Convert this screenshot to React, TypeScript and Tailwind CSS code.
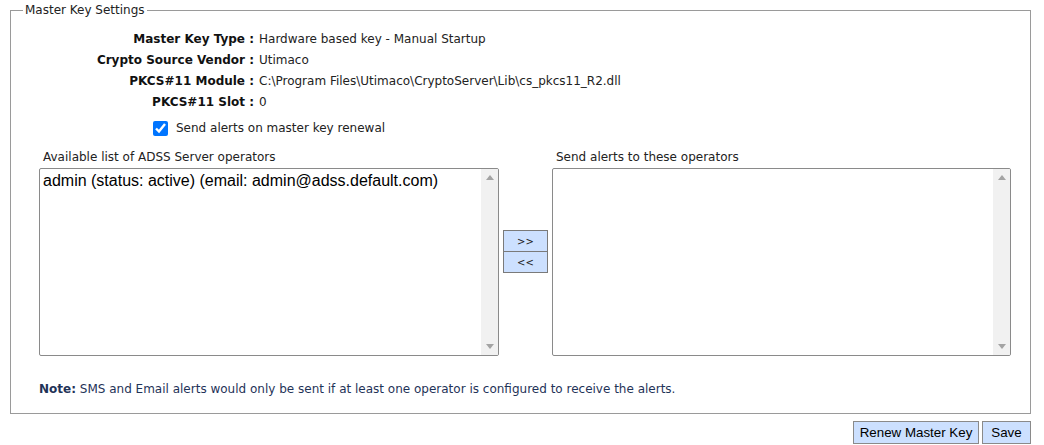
import React, { useState } from 'react';

const tahoma = { fontFamily: '"DejaVu Sans", Verdana, sans-serif' };

function Row({ label, value }: { label: string; value: string }) {
  return (
    <div className="flex h-[21px] items-center">
      <div className="w-[248px] pr-[5px] text-right text-[12px] font-bold text-[#111]">{label} :</div>
      <div className="text-[12px] text-[#222]">{value}</div>
    </div>
  );
}

function ListBox({ items }: { items: string[] }) {
  return (
    <div className="flex h-[188px] w-full shrink-0 overflow-hidden rounded-[2px] border border-[#8a8a8a] bg-white">
      <div className="flex-1 px-[3px] pt-[2px] text-[16px] leading-[19px] text-black" style={{ fontFamily: '"Liberation Sans", Arial, sans-serif' }}>
        {items.map((it) => <div key={it}>{it}</div>)}
      </div>
      <div className="flex w-[17px] flex-col items-center justify-between bg-[#f1f1f1] py-[6px]">
        <svg width="8" height="5" viewBox="0 0 8 5"><path d="M0 5 L4 0 L8 5 Z" fill="#a3a3a3" /></svg>
        <svg width="8" height="5" viewBox="0 0 8 5"><path d="M0 0 L4 5 L8 0 Z" fill="#a3a3a3" /></svg>
      </div>
    </div>
  );
}

export default function App() {
  const [alerts, setAlerts] = useState(true);
  return (
    <div className="h-[445px] w-[1044px] bg-white pl-[10px] pt-[2px]" style={tahoma}>
      <fieldset className="w-[1021px] border border-[#9a9a9a] pb-[15px]">
        <legend className="ml-[12px] px-[2px] text-[12px] leading-[16px] text-[#222]">Master Key Settings</legend>
        <div className="pt-[10px]">
          <Row label="Master Key Type" value="Hardware based key - Manual Startup" />
          <Row label="Crypto Source Vendor" value="Utimaco" />
          <Row label="PKCS#11 Module" value="C:\Program Files\Utimaco\CryptoServer\Lib\cs_pkcs11_R2.dll" />
          <Row label="PKCS#11 Slot" value="0" />
        </div>
        <label className="ml-[142px] mt-[6px] flex h-[20px] items-center gap-[8px] text-[12px] text-[#222]">
          <input type="checkbox" checked={alerts} onChange={(e) => setAlerts(e.target.checked)} className="h-[15px] w-[15px] accent-[#0075ff]" />
          Send alerts on master key renewal
        </label>
        <div className="ml-[28px] mt-[12px] flex gap-[4px]">
          <div className="flex w-[460px] flex-col">
            <div className="h-[18px] pl-[4px] text-[12px] leading-[14px] text-[#222]">Available list of ADSS Server operators</div>
            <ListBox items={['admin (status: active) (email: admin@adss.default.com)']} />
          </div>
          <div className="flex w-[45px] flex-col pt-[80px]">
            <button className="h-[22px] border border-[#7a7a7a] bg-[#cce0ff] text-[10px] text-[#222]">&gt;&gt;</button>
            <button className="h-[21px] border border-t-0 border-[#7a7a7a] bg-[#cce0ff] text-[10px] text-[#222]">&lt;&lt;</button>
          </div>
          <div className="flex w-[459px] flex-col">
            <div className="h-[18px] pl-[4px] text-[12px] leading-[14px] text-[#222]">Send alerts to these operators</div>
            <ListBox items={[]} />
          </div>
        </div>
        <div className="ml-[28px] mt-[24px] text-[12px] text-[#1f3358]">
          <span className="font-bold">Note:</span> SMS and Email alerts would only be sent if at least one operator is configured to receive the alerts.
        </div>
      </fieldset>
      <div className="mt-[7px] flex w-[1021px] justify-end gap-[3px]" style={{ fontFamily: '"Liberation Sans", Arial, sans-serif' }}>
        <button className="h-[23px] w-[126px] border border-[#8a8a8a] bg-[#cce0ff] text-[13.33px] text-black">Renew Master Key</button>
        <button className="h-[23px] w-[49px] border border-[#8a8a8a] bg-[#cce0ff] text-[13.33px] text-black">Save</button>
      </div>
    </div>
  );
}
